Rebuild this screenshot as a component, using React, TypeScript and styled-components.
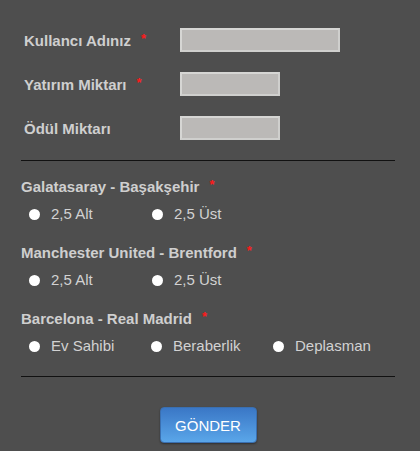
import styled, { createGlobalStyle } from 'styled-components'

const GlobalStyle = createGlobalStyle`
  html, body {
    margin: 0;
    padding: 0;
    background: #4e4e4e;
  }
  body {
    font-family: 'Liberation Sans', Arial, sans-serif;
  }
`

const matches = [
  { title: 'Galatasaray - Başakşehir', name: 'gs', options: ['2,5 Alt', '2,5 Üst'] },
  { title: 'Manchester United - Brentford', name: 'mu', options: ['2,5 Alt', '2,5 Üst'] },
  { title: 'Barcelona - Real Madrid', name: 'bar', options: ['Ev Sahibi', 'Beraberlik', 'Deplasman'] },
]

const App = () => {
  return (
    <>
      <GlobalStyle />
      <Form onSubmit={(e) => e.preventDefault()}>
        <Fields>
          <FieldRow>
            <FieldLabel>
              Kullancı Adınız<Required>*</Required>
            </FieldLabel>
            <TextInput type="text" inputWidth={160} />
          </FieldRow>
          <FieldRow>
            <FieldLabel>
              Yatırım Miktarı<Required>*</Required>
            </FieldLabel>
            <TextInput type="text" inputWidth={100} />
          </FieldRow>
          <FieldRow>
            <FieldLabel>Ödül Miktarı</FieldLabel>
            <TextInput type="text" inputWidth={100} />
          </FieldRow>
        </Fields>
        <Divider />
        <Matches>
          {matches.map((m) => (
            <MatchGroup key={m.name}>
              <MatchTitle>
                {m.title}
                <Required>*</Required>
              </MatchTitle>
              <OptionRow>
                {m.options.map((opt) => (
                  <Option key={opt}>
                    <RadioDot type="radio" name={m.name} />
                    {opt}
                  </Option>
                ))}
              </OptionRow>
            </MatchGroup>
          ))}
        </Matches>
        <Divider last />
        <ButtonRow>
          <SubmitButton type="submit">GÖNDER</SubmitButton>
        </ButtonRow>
      </Form>
    </>
  )
}

const Form = styled.form`
  display: flex;
  flex-direction: column;
  padding: 28px 25px 0 21px;
  height: 451px;
  box-sizing: border-box;
`

const Fields = styled.div`
  display: flex;
  flex-direction: column;
  gap: 20px;
  padding-left: 3px;
`

const FieldRow = styled.div`
  display: flex;
  align-items: center;
  height: 24px;
`

const FieldLabel = styled.label`
  width: 156px;
  font-size: 15px;
  font-weight: bold;
  color: #cfcfcf;
`

const Required = styled.span`
  color: #ff1a1a;
  font-size: 13px;
  margin-left: 10px;
  position: relative;
  top: -3px;
`

const TextInput = styled.input<{ inputWidth: number }>`
  width: ${(p) => p.inputWidth}px;
  height: 24px;
  box-sizing: border-box;
  background: #bbb9b7;
  border: 2px solid #d6d6d4;
  border-right-color: #cfcfcd;
  border-bottom-color: #cfcfcd;
  padding: 0 4px;
  margin: 0;
  outline: none;
`

const Divider = styled.hr<{ last?: boolean }>`
  border: none;
  border-top: 1px solid #111;
  margin: ${(p) => (p.last ? '19px' : '20px')} 0 0;
  width: 374px;
`

const Matches = styled.div`
  display: flex;
  flex-direction: column;
  gap: 19px;
  padding-top: 17px;
`

const MatchGroup = styled.div`
  display: flex;
  flex-direction: column;
  gap: 6px;
`

const MatchTitle = styled.div`
  font-size: 15px;
  font-weight: bold;
  color: #cfcfcf;
  line-height: 18px;
`

const OptionRow = styled.div`
  display: flex;
  padding-left: 8px;
`

const Option = styled.label`
  width: 123px;
  display: flex;
  align-items: center;
  font-size: 15px;
  color: #d2d2d2;
  line-height: 22px;
`

const RadioDot = styled.input`
  appearance: none;
  width: 11px;
  height: 11px;
  border-radius: 50%;
  background: #fff;
  margin: 0 11px 0 0;
  flex-shrink: 0;
`

const ButtonRow = styled.div`
  display: flex;
  justify-content: center;
  width: 374px;
  padding-top: 30px;
`

const SubmitButton = styled.button`
  width: 97px;
  height: 36px;
  border: 1px solid #3a6fb0;
  border-radius: 4px;
  background: linear-gradient(#3a77c6, #5aa6e9);
  color: #fff;
  font-family: 'Liberation Sans', Arial, sans-serif;
  font-size: 15px;
  box-shadow: 0 1px 2px rgba(0, 0, 0, 0.4);
  cursor: pointer;
`

export default App
